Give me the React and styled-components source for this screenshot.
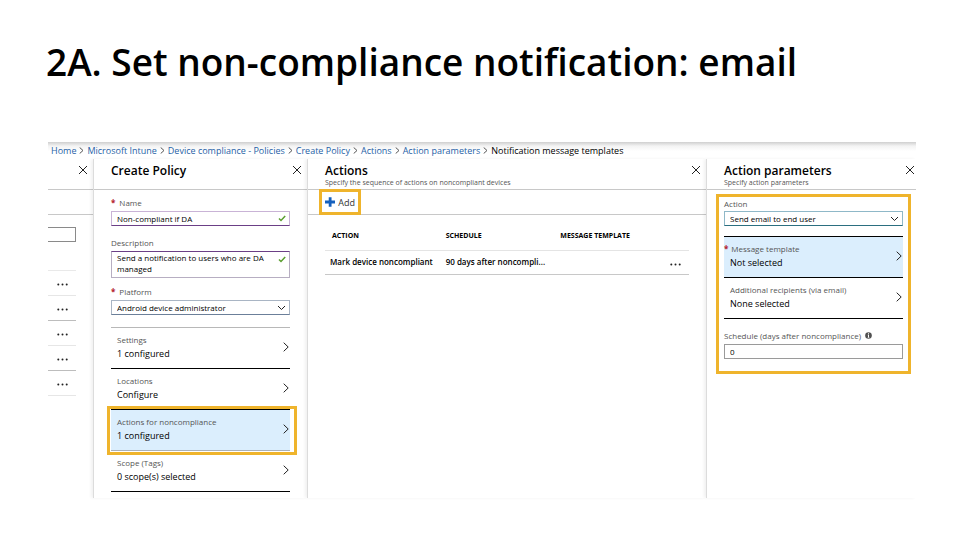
import React from "react";
import styled, { createGlobalStyle, css } from "styled-components";

const GlobalStyle = createGlobalStyle`
  * { box-sizing: border-box; }
  body { margin: 0; background: #fff; color: #000; }
  body, button, input, select, textarea { font-family: "Open Sans", "Noto Sans", sans-serif; }
`;

const highlight = "#efb42c";

const Slide = styled.main`
  padding: 34px 44px 42px 46px;
`;

const Title = styled.h1`
  margin: 0 0 52px;
  font-size: 37px;
  line-height: 56px;
  font-weight: 600;
  white-space: nowrap;
`;

const Portal = styled.section`
  margin-left: 2px;
  font-size: 9px;
  line-height: 12px;
`;

const Breadcrumb = styled.nav`
  display: flex;
  align-items: center;
  gap: 3px;
  height: 17px;
  padding-left: 3px;
  font-size: 9px;
  line-height: 12px;
  white-space: nowrap;
  background: linear-gradient(#cfcfcf, #f3f3f3 4px, #fff 9px);
`;

const CrumbLink = styled.a`
  color: #1f5fa6;
  text-decoration: none;
`;

const Blades = styled.div`
  display: grid;
  grid-template-columns: 45fr 214fr 399fr 210fr;
  min-height: 339px;
`;

const Blade = styled.section`
  min-width: 0;
  border-left: ${(p) => (p.$first ? "0" : "1px solid #dcdcdc")};
  box-shadow: ${(p) => (p.$first ? "none" : "-2px 0 3px rgba(0, 0, 0, 0.06)")};
`;

const BladeHeader = styled.header`
  display: flex;
  justify-content: space-between;
  align-items: flex-start;
  height: 31px;
  padding: 4px ${(p) => p.$end || 5}px 0 17px;
  border-bottom: 1px solid #c8c8c8;
`;

const BladeTitle = styled.h2`
  margin: 0;
  font-size: 12px;
  line-height: 15px;
  font-weight: 600;
  white-space: nowrap;
`;

const BladeSubtitle = styled.p`
  margin: 0;
  font-size: 7px;
  line-height: 9px;
  color: #555;
  white-space: nowrap;
`;

const IconButton = styled.button`
  display: flex;
  margin-left: auto;
  padding: 2px 0;
  border: 0;
  background: none;
`;

const Strip = styled.div`
  height: 25px;
  border-bottom: 1px solid #c8c8c8;
`;

const ClippedInput = styled.input`
  display: block;
  width: 28px;
  height: 15px;
  margin: 12px 0 28px;
  border: 1px solid #8a8a8a;
  border-left: 0;
`;

const MoreList = styled.ul`
  width: 28px;
  margin: 0;
  padding: 0;
  list-style: none;
  border-top: 1px solid #e9e9e9;
`;

const MoreItem = styled.li`
  display: flex;
  height: 25px;
  padding-top: 2px;
  align-items: center;
  justify-content: center;
  border-bottom: 1px solid ${(p) => (p.$dark ? "#bdbdbd" : "#e6e6e6")};
`;

const MoreButton = styled.button`
  display: flex;
  padding: 2px;
  border: 0;
  background: none;
`;

const Form = styled.form`
  padding: 6px 17px 0 17px;
`;

const HighlightForm = styled.form`
  margin: 4px 5px 0 9px;
  padding: 0 5px 12px;
  border: 3px solid ${highlight};
`;

const Field = styled.div`
  margin-bottom: ${(p) => p.$gap || 0}px;
`;

const Label = styled.label`
  display: flex;
  align-items: center;
  gap: 4px;
  height: 13px;
  margin-bottom: ${(p) => p.$space || 2}px;
  font-size: 8px;
  line-height: 13px;
  color: #555;
  white-space: nowrap;
`;

const ScheduleLabel = styled(Label)`
  margin-top: 10px;
`;

const Required = styled.span`
  color: #b3202c;
  font-weight: 700;
`;

const Control = styled.div`
  display: flex;
  align-items: center;
  padding-right: 3px;
  border: 1px solid ${(p) => p.$color};
  ${(p) => p.$base && css`border-bottom-color: ${p.$base};`}
  ${(p) => p.$top && css`border-top-color: ${p.$top};`}
`;

const controlText = css`
  flex: 1;
  min-width: 0;
  margin: 0;
  padding: 0 5px;
  border: 0;
  outline: 0;
  background: transparent;
  color: #000;
  font-size: 8px;
`;

const TextInput = styled.input`
  ${controlText}
  height: 13px;
`;

const TextArea = styled.textarea`
  ${controlText}
  height: 25px;
  line-height: 11px;
  resize: none;
  overflow: hidden;
`;

const Select = styled.select`
  ${controlText}
  height: 13px;
  appearance: none;
`;

const Mark = styled.span`
  display: flex;
  align-self: ${(p) => (p.$top ? "flex-start" : "center")};
  padding-top: ${(p) => (p.$top ? 4 : 0)}px;
`;

const Picker = styled.button`
  position: relative;
  display: flex;
  width: 100%;
  height: 41px;
  align-items: center;
  padding: 0 1px 2px ${(p) => (p.$required ? 0 : 6)}px;
  border: 0;
  border-bottom: 1px solid ${(p) => p.$base || "#000"};
  background: ${(p) => (p.$active ? "#dbeefd" : "transparent")};
  text-align: left;
  color: #000;
  ${(p) => p.$marked && css`
    &::after {
      content: "";
      position: absolute;
      inset: -4px -7px -5px -4px;
      border: 3px solid ${highlight};
    }
  `}
`;

const PickerList = styled.div`
  border-top: 1px solid ${(p) => p.$color};
`;

const PickerText = styled.span`
  flex: 1;
  min-width: 0;
`;

const PickerLabel = styled.span`
  display: flex;
  gap: 3px;
  font-size: 8px;
  line-height: 13px;
  color: #555;
  white-space: nowrap;
`;

const PickerValue = styled.span`
  display: block;
  padding-left: ${(p) => (p.$required ? 6 : 0)}px;
  font-size: 9px;
  line-height: 15px;
  white-space: nowrap;
`;

const Toolbar = styled.div`
  display: flex;
  height: 25px;
  padding-left: 14px;
  border-bottom: 1px solid #c8c8c8;
`;

const AddButton = styled.button`
  display: flex;
  align-items: center;
  gap: 3px;
  width: 36px;
  height: 20px;
  margin-top: 2px;
  padding: 0 3px;
  border: 0;
  background: #fff;
  color: #333;
  font-size: 9px;
  outline: 3px solid ${highlight};
`;

const ActionTable = styled.table`
  width: calc(100% - 34px);
  margin: 7px 17px 0;
  border-collapse: collapse;
  table-layout: fixed;
  text-align: left;
  white-space: nowrap;
`;

const HeadCell = styled.th`
  width: ${(p) => p.$width};
  height: 28px;
  padding: 0 0 0 ${(p) => (p.$first ? 7 : 6)}px;
  font-size: 7px;
  font-weight: 700;
  border-bottom: 1px solid #e4e4e4;
`;

const Cell = styled.td`
  height: 24px;
  padding: 0 0 0 ${(p) => (p.$first ? 5 : 6)}px;
  font-size: 8px;
  font-weight: 600;
  border-bottom: 1px solid #c8c8c8;
`;

const RowActions = styled.div`
  display: flex;
  justify-content: flex-end;
  padding: 4px 6px 0 0;
`;

const Close = () => (
  <svg width="10" height="10" viewBox="0 0 10 10" fill="none" stroke="#222" strokeWidth="1">
    <path d="M1 1l8 8M9 1L1 9" />
  </svg>
);
const Right = () => (
  <svg width="6" height="10" viewBox="0 0 6 10" fill="none" stroke="#222" strokeWidth="1">
    <path d="M.7.7L5.2 5 .7 9.3" />
  </svg>
);
const CrumbArrow = () => (
  <svg width="5" height="7" viewBox="0 0 5 7" fill="none" stroke="#555" strokeWidth="1">
    <path d="M.7.5L4 3.5.7 6.5" />
  </svg>
);
const Down = () => (
  <svg width="9" height="6" viewBox="0 0 9 6" fill="none" stroke="#222" strokeWidth="1">
    <path d="M1 1l3.500 3.500L8 1" />
  </svg>
);
const Check = () => (
  <svg width="8" height="7" viewBox="0 0 8 7" fill="none" stroke="#5a9e2f" strokeWidth="1.5">
    <path d="M1 3.500l2 2L7.200 1" />
  </svg>
);
const Dots = () => (
  <svg width="11" height="3" viewBox="0 0 11 3" fill="#222">
    <circle cx="1.3" cy="1.5" r="1" />
    <circle cx="5.5" cy="1.5" r="1" />
    <circle cx="9.7" cy="1.5" r="1" />
  </svg>
);
const Plus = () => (
  <svg width="11" height="10" viewBox="0 0 11 10" fill="#1560bd">
    <path d="M4 0h3v3.500h4v3H7V10H4V6.500H0v-3h4z" />
  </svg>
);
const Info = () => (
  <svg width="7" height="7" viewBox="0 0 7 7">
    <circle cx="3.5" cy="3.5" r="3.3" fill="#505050" />
    <path d="M3 1.200h1v1H3zM2.700 2.800H4v2.500h.4v.5H2.700v-.5H3V3.300h-.3z" fill="#fff" />
  </svg>
);

function PickerRow({ label, value, required, ...rest }) {
  return (
    <Picker type="button" $required={required} {...rest}>
      <PickerText>
        <PickerLabel>
          {required && <Required>*</Required>}
          {label}
        </PickerLabel>
        <PickerValue $required={required}>{value}</PickerValue>
      </PickerText>
      <Right />
    </Picker>
  );
}

function CloseButton({ name }) {
  return (
    <IconButton type="button" aria-label={"Close " + name}>
      <Close />
    </IconButton>
  );
}

const crumbs = [
  "Home",
  "Microsoft Intune",
  "Device compliance - Policies",
  "Create Policy",
  "Actions",
  "Action parameters",
];

export default function App() {
  return (
    <Slide>
      <GlobalStyle />
      <Title>2A. Set non-compliance notification: email</Title>
      <Portal>
        <Breadcrumb aria-label="Breadcrumb">
          {crumbs.map((c) => (
            <React.Fragment key={c}>
              <CrumbLink href="#">{c}</CrumbLink>
              <CrumbArrow />
            </React.Fragment>
          ))}
          <span>Notification message templates</span>
        </Breadcrumb>
        <Blades>
          <Blade $first>
            <BladeHeader>
              <CloseButton name="policies" />
            </BladeHeader>
            <Strip />
            <ClippedInput aria-label="Filter policies" />
            <MoreList>
              {[false, true, false, true, false].map((dark, i) => (
                <MoreItem key={i} $dark={dark}>
                  <MoreButton type="button" aria-label="More options">
                    <Dots />
                  </MoreButton>
                </MoreItem>
              ))}
            </MoreList>
          </Blade>

          <Blade>
            <BladeHeader>
              <BladeTitle>Create Policy</BladeTitle>
              <CloseButton name="Create Policy" />
            </BladeHeader>
            <Form>
              <Field $gap={10}>
                <Label htmlFor="name"><Required>*</Required>Name</Label>
                <Control $color="#c9b3d6" $base="#6b3f86">
                  <TextInput id="name" defaultValue="Non-compliant if DA" />
                  <Mark><Check /></Mark>
                </Control>
              </Field>
              <Field $gap={7}>
                <Label htmlFor="description">Description</Label>
                <Control $color="#b7aec2" $top="#6b3f86">
                  <TextArea id="description" defaultValue="Send a notification to users who are DA managed" />
                  <Mark $top><Check /></Mark>
                </Control>
              </Field>
              <Field $gap={12}>
                <Label htmlFor="platform"><Required>*</Required>Platform</Label>
                <Control $color="#a9b5c4" $base="#6b7f99">
                  <Select id="platform"><option>Android device administrator</option></Select>
                  <Down />
                </Control>
              </Field>
              <PickerList $color="#b8b8b8">
                <PickerRow label="Settings" value="1 configured" />
                <PickerRow label="Locations" value="Configure" />
                <PickerRow label="Actions for noncompliance" value="1 configured" $active $marked $base="#a9b0b8" />
                <PickerRow label="Scope (Tags)" value="0 scope(s) selected" />
              </PickerList>
            </Form>
          </Blade>

          <Blade>
            <BladeHeader>
              <div>
                <BladeTitle>Actions</BladeTitle>
                <BladeSubtitle>Specify the sequence of actions on noncompliant devices</BladeSubtitle>
              </div>
              <CloseButton name="Actions" />
            </BladeHeader>
            <Toolbar>
              <AddButton type="button"><Plus />Add</AddButton>
            </Toolbar>
            <ActionTable>
              <thead>
                <tr>
                  <HeadCell $first $width="31.5%">ACTION</HeadCell>
                  <HeadCell $width="31.5%">SCHEDULE</HeadCell>
                  <HeadCell>MESSAGE TEMPLATE</HeadCell>
                </tr>
              </thead>
              <tbody>
                <tr>
                  <Cell $first>Mark device noncompliant</Cell>
                  <Cell>90 days after noncompli...</Cell>
                  <Cell>
                    <RowActions>
                      <MoreButton type="button" aria-label="More options"><Dots /></MoreButton>
                    </RowActions>
                  </Cell>
                </tr>
              </tbody>
            </ActionTable>
          </Blade>

          <Blade>
            <BladeHeader $end={1}>
              <div>
                <BladeTitle>Action parameters</BladeTitle>
                <BladeSubtitle>Specify action parameters</BladeSubtitle>
              </div>
              <CloseButton name="Action parameters" />
            </BladeHeader>
            <HighlightForm>
              <Field $gap={10}>
                <Label $space={1} htmlFor="action">Action</Label>
                <Control $color="#8fb8c8" $base="#2b6f80">
                  <Select id="action"><option>Send email to end user</option></Select>
                  <Down />
                </Control>
              </Field>
              <PickerList $color="#000">
                <PickerRow label="Message template" value="Not selected" required $active />
                <PickerRow label="Additional recipients (via email)" value="None selected" />
              </PickerList>
              <Field>
                <ScheduleLabel htmlFor="schedule">Schedule (days after noncompliance)<Info /></ScheduleLabel>
                <Control $color="#9a9a9a">
                  <TextInput id="schedule" defaultValue="0" />
                </Control>
              </Field>
            </HighlightForm>
          </Blade>
        </Blades>
      </Portal>
    </Slide>
  );
}
